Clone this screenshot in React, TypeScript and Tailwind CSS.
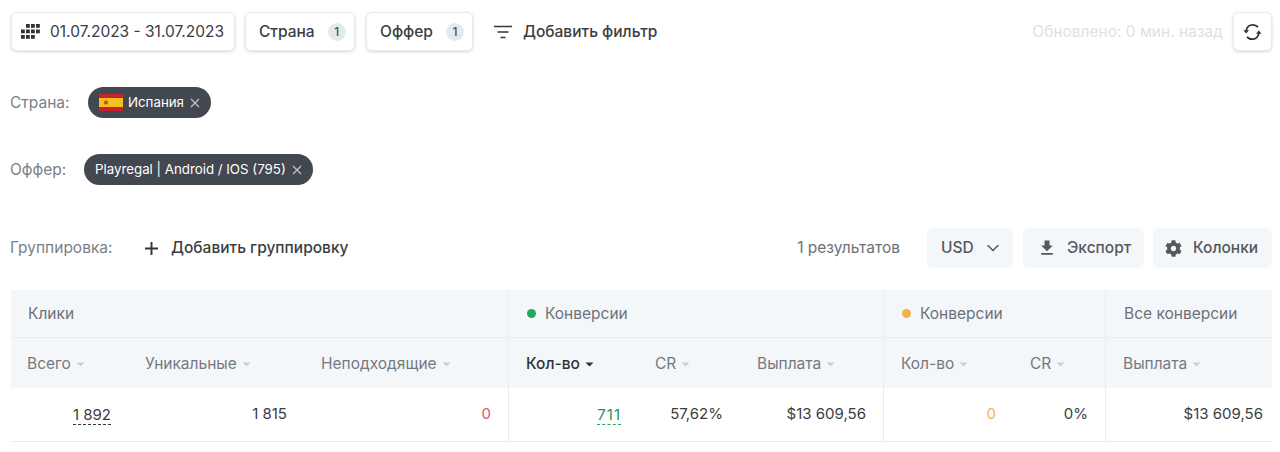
import { ChevronDown } from 'lucide-react';
import { FaCog } from 'react-icons/fa';
import { MdFileDownload } from 'react-icons/md';

function SortArrow({ active = false }: { active?: boolean }) {
  return (
    <svg width="9" height="5" viewBox="0 0 9 5" className={active ? 'text-[#2f3237]' : 'text-[#c9ced4]'}>
      <path d="M0.5 0.5h8L4.5 4.5z" fill="currentColor" />
    </svg>
  );
}

function CalendarDots() {
  const rows = [
    { start: 6, y: 0, count: 3 },
    { start: 1, y: 5.5, count: 4 },
    { start: 1, y: 11, count: 3 },
  ];
  return (
    <svg width="21" height="15" viewBox="0 0 21 15" className="text-[#2f3237]">
      {rows.map((row) =>
        Array.from({ length: row.count }).map((_, i) => (
          <rect key={`${row.y}-${i}`} x={row.start + i * 5} y={row.y} width="3.8" height="3.8" fill="currentColor" />
        )),
      )}
    </svg>
  );
}

function FilterLines() {
  return (
    <svg width="18" height="14" viewBox="0 0 18 14" fill="none" stroke="#33363b" strokeWidth="1.7">
      <path d="M0 1.5h18M3.5 7h11M6.5 12.5h5" />
    </svg>
  );
}

function SyncIcon() {
  return (
    <svg width="19" height="18" viewBox="0 0 19 18" fill="none" stroke="#2f3237" strokeWidth="1.8">
      <path d="M15 4.2C13.6 2.6 11.8 1.8 9.8 1.8 6.4 1.8 3.6 4.4 3.2 7.8" />
      <path d="M0.4 7.2h5.6L3.2 10.6z" fill="#2f3237" stroke="none" />
      <path d="M4 13.8c1.4 1.6 3.2 2.4 5.2 2.4 3.4 0 6.2-2.6 6.6-6" />
      <path d="M18.6 10.8h-5.6L15.8 7.4z" fill="#2f3237" stroke="none" />
    </svg>
  );
}

function PlusIcon() {
  return (
    <svg width="15" height="15" viewBox="0 0 15 15" fill="none" stroke="#33363b" strokeWidth="1.9">
      <path d="M7.5 1v13M1 7.5h13" />
    </svg>
  );
}

function CloseIcon() {
  return (
    <svg width="10" height="10" viewBox="0 0 10 10" fill="none" stroke="#c5c8cc" strokeWidth="1.1" className="ml-[6px]">
      <path d="M1 1l8 8M9 1l-8 8" />
    </svg>
  );
}

function FilterButton({ label }: { label: string }) {
  return (
    <button className="flex h-[39px] items-center gap-[13px] rounded-[6px] border border-[#e9ecef] bg-white pl-[13px] pr-[8px] text-[15.5px] font-medium text-[#3a3d42] shadow-[0_1px_3px_rgba(40,50,60,0.2)]">
      {label}
      <span className="flex h-[18px] w-[18px] items-center justify-center rounded-full bg-[#e6e9ec] text-[12px] text-[#4a4d52]">1</span>
    </button>
  );
}

function Tag({ children }: { children: React.ReactNode }) {
  return (
    <span className="flex h-[31px] items-center rounded-full bg-[#43474f] pl-[11px] pr-[11px] text-[13.3px] text-white">
      {children}
      <CloseIcon />
    </span>
  );
}

function SpainFlag() {
  return (
    <svg width="24" height="17" viewBox="0 0 24 17" className="mr-[5px]">
      <rect width="24" height="17" rx="1" fill="#c8202c" />
      <rect y="4" width="24" height="9" fill="#f7c01f" />
      <rect x="5" y="6.5" width="4" height="4" rx="1.5" fill="#c0562a" />
    </svg>
  );
}

function ActionButton({ children }: { children: React.ReactNode }) {
  return (
    <button className="flex h-[40px] items-center rounded-[6px] bg-[#f4f7fa] text-[15.5px] font-medium text-[#55585e]">
      {children}
    </button>
  );
}

const subHeaders = [
  { label: 'Всего', border: false, first: true },
  { label: 'Уникальные', border: false },
  { label: 'Неподходящие', border: true },
  { label: 'Кол-во', border: false, active: true },
  { label: 'CR', border: false },
  { label: 'Выплата', border: true },
  { label: 'Кол-во', border: false },
  { label: 'CR', border: true },
  { label: 'Выплата', border: false },
];

export default function App() {
  return (
    <div className="h-[452px] w-[1280px] overflow-hidden bg-white pl-[11px] pr-[8px] pt-[12px] font-['Inter',sans-serif] text-[15.5px] text-[#3a3d42]">
      {/* Toolbar */}
      <div className="flex items-center">
        <button className="flex h-[39px] w-[224px] items-center gap-[9px] rounded-[6px] border border-[#e9ecef] bg-white pl-[8px] text-[15.5px] text-[#3a3d42] shadow-[0_1px_3px_rgba(40,50,60,0.2)]">
          <CalendarDots />
          01.07.2023 - 31.07.2023
        </button>
        <div className="ml-[10px] w-[110px]">
          <FilterButton label="Страна" />
        </div>
        <div className="ml-[11px]">
          <FilterButton label="Оффер" />
        </div>
        <button className="ml-[21px] flex items-center gap-[11px] text-[15.5px] font-medium text-[#3a3d42]">
          <FilterLines />
          Добавить фильтр
        </button>
        <span className="ml-auto text-[#dfe1e4]">Обновлено: 0 мин. назад</span>
        <button className="ml-[10px] flex h-[39px] w-[39px] items-center justify-center rounded-[6px] border border-[#e9ecef] bg-white shadow-[0_1px_3px_rgba(40,50,60,0.2)]">
          <SyncIcon />
        </button>
      </div>

      {/* Selected filters */}
      <div className="mt-[36px] flex items-center">
        <span className="-ml-px w-[78px] text-[#7b7f85]">Страна:</span>
        <Tag>
          <SpainFlag />
          Испания
        </Tag>
      </div>
      <div className="mt-[36px] flex items-center">
        <span className="-ml-px w-[74px] text-[#7b7f85]">Оффер:</span>
        <Tag>Playregal | Android / IOS (795)</Tag>
      </div>

      {/* Grouping */}
      <div className="mt-[43px] flex h-[40px] items-center">
        <span className="-ml-px w-[134px] text-[#7b7f85]">Группировка:</span>
        <PlusIcon />
        <span className="ml-[12px] font-medium text-[#3a3d42]">Добавить группировку</span>
        <span className="ml-auto text-[#6d7177]">1 результатов</span>
        <div className="ml-[27px]">
          <ActionButton>
            <span className="flex w-[86px] items-center justify-between pl-[14px] pr-[10px]">
              USD
              <ChevronDown className="h-[20px] w-[20px]" strokeWidth={1.8} />
            </span>
          </ActionButton>
        </div>
        <div className="ml-[10px]">
          <ActionButton>
            <span className="flex w-[121px] items-center gap-[10px] pl-[14px]">
              <MdFileDownload className="h-[20px] w-[20px]" />
              Экспорт
            </span>
          </ActionButton>
        </div>
        <div className="ml-[9px]">
          <ActionButton>
            <span className="flex w-[119px] items-center gap-[11px] pl-[12px]">
              <FaCog className="h-[17px] w-[17px]" />
              Колонки
            </span>
          </ActionButton>
        </div>
      </div>

      {/* Table */}
      <div className="mt-[22px] grid grid-cols-[117px_176px_205px_129px_102px_144px_129px_93px_166px]">
        <div className="col-span-3 flex h-[48px] items-center border-b border-r border-[#e9edf1] bg-[#f4f7fa] pl-[17px] text-[#6d7177]">Клики</div>
        <div className="col-span-3 flex h-[48px] items-center gap-[9px] border-b border-r border-[#e9edf1] bg-[#f4f7fa] pl-[18px] text-[#6d7177]">
          <span className="h-[9px] w-[9px] rounded-full bg-[#22a861]" />
          Конверсии
        </div>
        <div className="col-span-2 flex h-[48px] items-center gap-[9px] border-b border-r border-[#e9edf1] bg-[#f4f7fa] pl-[18px] text-[#6d7177]">
          <span className="h-[9px] w-[9px] rounded-full bg-[#f3b24c]" />
          Конверсии
        </div>
        <div className="flex h-[48px] items-center border-b border-[#e9edf1] bg-[#f4f7fa] pl-[18px] text-[#6d7177]">Все конверсии</div>

        {subHeaders.map((h, i) => (
          <div
            key={i}
            className={`flex h-[50px] items-center gap-[5px] bg-[#f4f7fa] pt-[2px] ${h.first ? 'pl-[16px]' : 'pl-[17px]'} ${h.border ? 'border-r border-[#e9edf1]' : ''} ${h.active ? 'font-medium text-[#2f3237]' : 'text-[#75797f]'}`}
          >
            {h.label}
            <SortArrow active={h.active} />
          </div>
        ))}

        <Cell><span className="border-b border-dashed border-[#33363b] leading-[19px]">1 892</span></Cell>
        <Cell>1 815</Cell>
        <Cell border><span className="text-[#e0566c]">0</span></Cell>
        <Cell><span className="border-b border-dashed border-[#22a861] leading-[19px] tracking-[1px] text-[#22965a]">711</span></Cell>
        <Cell>57,62%</Cell>
        <Cell border>$13 609,56</Cell>
        <Cell><span className="text-[#f3b24c]">0</span></Cell>
        <Cell border>0%</Cell>
        <Cell last>$13 609,56</Cell>
      </div>
    </div>
  );
}

function Cell({ children, border = false, last = false }: { children: React.ReactNode; border?: boolean; last?: boolean }) {
  return (
    <div
      className={`flex h-[54px] items-center justify-end border-b border-[#e9ecef] text-[15px] text-[#3a3d42] ${border ? 'border-r' : ''} ${last ? 'pr-[9px]' : 'pr-[17px]'}`}
    >
      {children}
    </div>
  );
}
